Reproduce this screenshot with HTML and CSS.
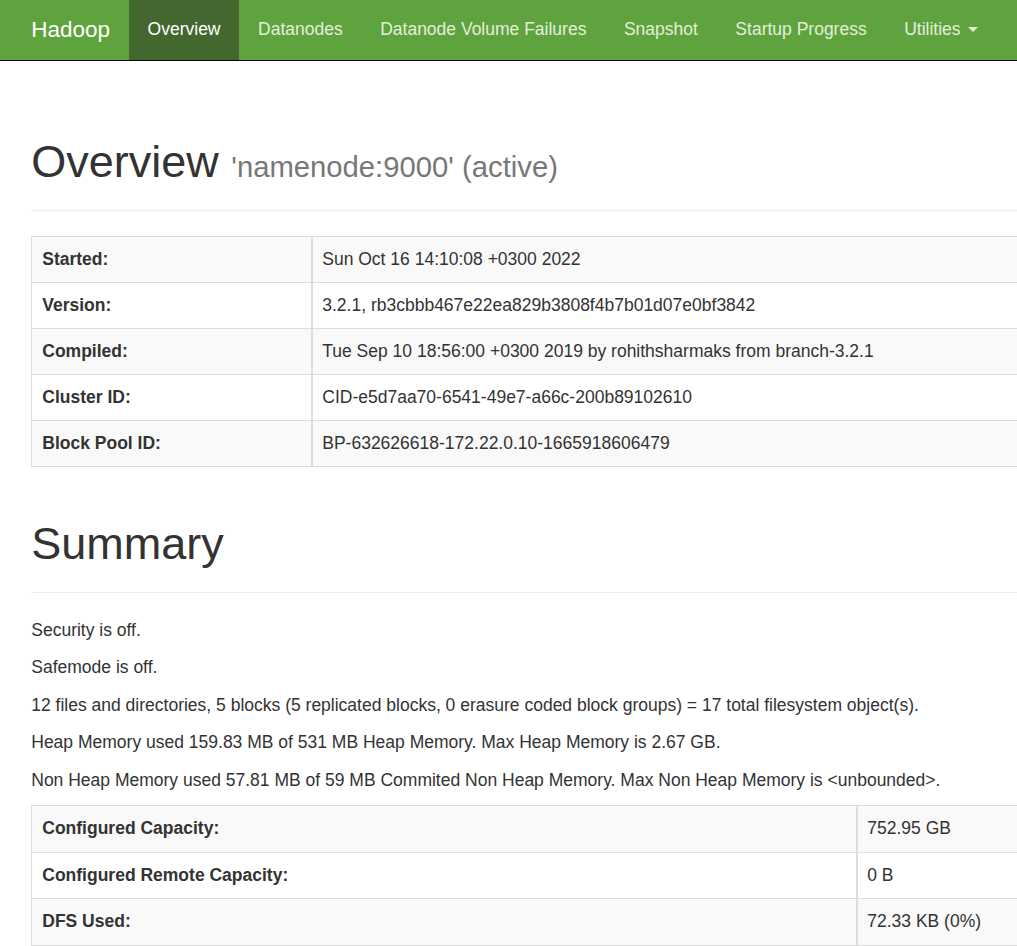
FILE: index.html
```html
<!DOCTYPE html>
<html>
<head>
<meta charset="utf-8">
<title>Namenode information</title>
<link rel="stylesheet" href="styles.css">
</head>
<body>
<header class="navbar">
  <div class="nav-inner">
    <a class="brand" href="#">Hadoop</a>
    <ul class="nav">
      <li class="active"><a href="#">Overview</a></li>
      <li><a href="#">Datanodes</a></li>
      <li><a href="#">Datanode Volume Failures</a></li>
      <li><a href="#">Snapshot</a></li>
      <li><a href="#">Startup Progress</a></li>
      <li><a href="#">Utilities <span class="caret"></span></a></li>
    </ul>
  </div>
</header>

<main class="container">
  <div class="page-header first">
    <h1>Overview <small>'namenode:9000' (active)</small></h1>
  </div>

  <table class="table info">
    <tbody>
      <tr><th>Started:</th><td>Sun Oct 16 14:10:08 +0300 2022</td></tr>
      <tr><th>Version:</th><td>3.2.1, rb3cbbb467e22ea829b3808f4b7b01d07e0bf3842</td></tr>
      <tr><th>Compiled:</th><td>Tue Sep 10 18:56:00 +0300 2019 by rohithsharmaks from branch-3.2.1</td></tr>
      <tr><th>Cluster ID:</th><td>CID-e5d7aa70-6541-49e7-a66c-200b89102610</td></tr>
      <tr><th>Block Pool ID:</th><td>BP-632626618-172.22.0.10-1665918606479</td></tr>
    </tbody>
  </table>

  <div class="page-header second">
    <h1>Summary</h1>
  </div>

  <p>Security is off.</p>
  <p>Safemode is off.</p>
  <p>12 files and directories, 5 blocks (5 replicated blocks, 0 erasure coded block groups) = 17 total filesystem object(s).</p>
  <p>Heap Memory used 159.83 MB of 531 MB Heap Memory. Max Heap Memory is 2.67 GB.</p>
  <p>Non Heap Memory used 57.81 MB of 59 MB Commited Non Heap Memory. Max Non Heap Memory is &lt;unbounded&gt;.</p>

  <table class="table summary">
    <tbody>
      <tr><th>Configured Capacity:</th><td>752.95 GB</td></tr>
      <tr><th>Configured Remote Capacity:</th><td>0 B</td></tr>
      <tr><th>DFS Used:</th><td>72.33 KB (0%)</td></tr>
    </tbody>
  </table>
</main>
</body>
</html>
```
FILE: styles.css
```css
html {
  overflow: hidden;
}

body {
  margin: 0;
  font-family: "Liberation Sans", Arial, Helvetica, sans-serif;
  font-size: 17.5px;
  line-height: 25px;
  color: #333;
  background: #fff;
}

a {
  text-decoration: none;
}

.navbar {
  background-color: #5fa33e;
  border-bottom: 1px solid #080808;
  height: 60px;
}

.nav-inner {
  display: flex;
  padding-left: 12.5px;
  width: 1600px;
}

.brand {
  display: block;
  height: 60px;
  box-sizing: border-box;
  padding: 16.5px 18.75px 0;
  font-size: 22.5px;
  line-height: 25px;
  color: #fff;
}

.nav {
  display: flex;
  list-style: none;
  margin: 0;
  padding: 0;
}

.nav a {
  display: block;
  height: 60px;
  box-sizing: border-box;
  padding: 16.5px 18.75px 0;
  line-height: 25px;
  color: #e2efdb;
}

.nav .active a {
  background-color: #44672f;
  color: #fff;
}

.caret {
  display: inline-block;
  width: 0;
  height: 0;
  margin-left: 2.5px;
  vertical-align: middle;
  border-top: 5px solid;
  border-left: 5px solid transparent;
  border-right: 5px solid transparent;
}

.container {
  width: 1425px;
  padding-left: 31.25px;
}

.page-header {
  padding-bottom: 11.25px;
  border-bottom: 1px solid #eee;
  margin: 0 0 25px;
}

.page-header.first {
  margin-top: 75.75px;
}

.page-header.second {
  margin-top: 51.75px;
  margin-bottom: 24.5px;
}

h1 {
  margin: 0 0 12.5px;
  font-size: 45px;
  line-height: 49.5px;
  font-weight: normal;
  color: #333;
}

h1 small {
  font-size: 29.25px;
  line-height: 1;
  color: #777;
  font-weight: normal;
}

p {
  margin: 0 0 12.5px;
}

.table {
  width: 100%;
  border-collapse: collapse;
  border-spacing: 0;
  margin-bottom: 25px;
}

.table th,
.table td {
  padding: 10px;
  line-height: 25px;
  text-align: left;
  vertical-align: top;
  border-top: 1px solid #ddd;
  border-bottom: 1px solid #ddd;
  border-left: 1px solid #ddd;
}

.table th {
  font-weight: bold;
}

.table td {
  border-left: 2px solid #ddd;
  padding-left: 9px;
}

.table tr:nth-child(odd) th,
.table tr:nth-child(odd) td {
  background-color: #f9f9f9;
}

.summary th,
.summary td {
  padding-top: 10.25px;
  padding-bottom: 10.25px;
}

.info th {
  width: 259px;
}

.summary th {
  width: 804px;
}
```
